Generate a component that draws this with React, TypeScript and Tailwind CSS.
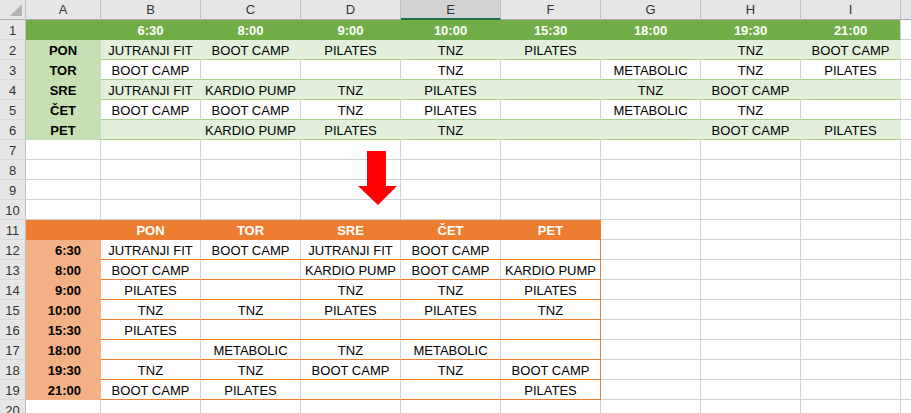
import React from 'react';

const COLS = ['A', 'B', 'C', 'D', 'E', 'F', 'G', 'H', 'I'];
const WIDTHS = ['w-[75px]', 'w-[100px]', 'w-[100px]', 'w-[100px]', 'w-[100px]', 'w-[100px]', 'w-[100px]', 'w-[100px]', 'w-[100px]'];

const TIMES = ['6:30', '8:00', '9:00', '10:00', '15:30', '18:00', '19:30', '21:00'];

const GREEN_ROWS: string[][] = [
    ['PON', 'JUTRANJI FIT', 'BOOT CAMP', 'PILATES', 'TNZ', 'PILATES', '', 'TNZ', 'BOOT CAMP'],
    ['TOR', 'BOOT CAMP', '', '', 'TNZ', '', 'METABOLIC', 'TNZ', 'PILATES'],
    ['SRE', 'JUTRANJI FIT', 'KARDIO PUMP', 'TNZ', 'PILATES', '', 'TNZ', 'BOOT CAMP', ''],
    ['ČET', 'BOOT CAMP', 'BOOT CAMP', 'TNZ', 'PILATES', '', 'METABOLIC', 'TNZ', ''],
    ['PET', '', 'KARDIO PUMP', 'PILATES', 'TNZ', '', '', 'BOOT CAMP', 'PILATES'],
];

const ORANGE_ROWS: string[][] = [
    ['6:30', 'JUTRANJI FIT', 'BOOT CAMP', 'JUTRANJI FIT', 'BOOT CAMP', ''],
    ['8:00', 'BOOT CAMP', '', 'KARDIO PUMP', 'BOOT CAMP', 'KARDIO PUMP'],
    ['9:00', 'PILATES', '', 'TNZ', 'TNZ', 'PILATES'],
    ['10:00', 'TNZ', 'TNZ', 'PILATES', 'PILATES', 'TNZ'],
    ['15:30', 'PILATES', '', '', '', ''],
    ['18:00', '', 'METABOLIC', 'TNZ', 'METABOLIC', ''],
    ['19:30', 'TNZ', 'TNZ', 'BOOT CAMP', 'TNZ', 'BOOT CAMP'],
    ['21:00', 'BOOT CAMP', 'PILATES', '', '', 'PILATES'],
];

const Cell = ({ w, className, children }: { w: string; className: string; children?: React.ReactNode }) => (
    <div className={`${w} h-[20px] shrink-0 box-border border-r border-b pt-[2px] leading-[17px] whitespace-nowrap overflow-visible ${className}`}>
        {children}
    </div>
);

const RowNum = ({ n }: { n: number }) => (
    <div className="w-[26px] h-[20px] shrink-0 box-border border-r border-b border-r-[#BFBFBF] border-b-[#D9D9D9] bg-[#E6E6E6] text-center text-[#333] pt-[2px] leading-[17px]">
        {n}
    </div>
);

const Filler = () => <div className="flex-1 h-[20px] box-border border-b border-[#D4D4D4]" />;

const plain = 'bg-white border-[#D4D4D4]';

export default function App() {
    return (
        <div className="relative w-[911px] h-[413px] overflow-hidden bg-white text-[13px] text-black font-['Liberation_Sans',Arial,sans-serif]">
            {/* column headers */}
            <div className="flex">
                <div className="relative w-[26px] h-[20px] shrink-0 box-border border-r border-b border-r-[#BFBFBF] border-b-[#ABABAB] bg-[#E6E6E6]">
                    <svg className="absolute left-[10px] top-[4px]" width="13" height="13" viewBox="0 0 13 13">
                        <polygon points="12,0 12,12 0,12" fill="#B4B4B4" />
                    </svg>
                </div>
                {COLS.map((c, i) =>
                    c === 'E' ? (
                        <div key={c} className={`${WIDTHS[i]} h-[20px] shrink-0 box-border border-r border-r-[#BFBFBF] border-b-2 border-b-[#217346] bg-[#D2D2D2] text-center text-[#333] pt-[2px] leading-[16px]`}>
                            {c}
                        </div>
                    ) : (
                        <div key={c} className={`${WIDTHS[i]} h-[20px] shrink-0 box-border border-r border-b border-r-[#BFBFBF] border-b-[#ABABAB] bg-[#E6E6E6] text-center text-[#333] pt-[2px] leading-[16px]`}>
                            {c}
                        </div>
                    )
                )}
                <div className="flex-1 h-[20px] box-border border-b border-[#ABABAB] bg-[#E6E6E6]" />
            </div>

            {/* row 1: green header */}
            <div className="flex">
                <RowNum n={1} />
                {COLS.map((c, i) => (
                    <Cell key={c} w={WIDTHS[i]} className={`bg-[#70AD47] border-r-[#70AD47] border-b-[#70AD47] text-center font-bold text-white ${i === 8 ? 'border-r-[#D4D4D4]' : ''}`}>
                        {i > 0 ? TIMES[i - 1] : ''}
                    </Cell>
                ))}
                <Filler />
            </div>

            {/* rows 2-6 */}
            {GREEN_ROWS.map((row, r) => {
                const band = r % 2 === 0;
                return (
                    <div key={r} className="flex">
                        <RowNum n={r + 2} />
                        {row.map((v, i) =>
                            i === 0 ? (
                                <Cell key={i} w={WIDTHS[i]} className="bg-[#C6E0B4] border-r-[#C6E0B4] border-b-[#C6E0B4] text-center font-bold">
                                    {v}
                                </Cell>
                            ) : (
                                <Cell
                                    key={i}
                                    w={WIDTHS[i]}
                                    className={`text-center border-b-[#A9D08E] ${band ? 'bg-[#E2EFDA] border-r-[#E2EFDA]' : 'bg-white border-r-[#D4D4D4]'} ${i === 8 ? 'border-r-[#D4D4D4]' : ''}`}
                                >
                                    {v}
                                </Cell>
                            )
                        )}
                        <Filler />
                    </div>
                );
            })}

            {/* rows 7-10 */}
            {[7, 8, 9, 10].map((n) => (
                <div key={n} className="flex">
                    <RowNum n={n} />
                    {COLS.map((c, i) => (
                        <Cell key={c} w={WIDTHS[i]} className={plain} />
                    ))}
                    <Filler />
                </div>
            ))}

            {/* row 11: orange header */}
            <div className="flex">
                <RowNum n={11} />
                {COLS.map((c, i) =>
                    i < 6 ? (
                        <Cell key={c} w={WIDTHS[i]} className="bg-[#ED7D31] border-r-[#ED7D31] border-b-[#ED7D31] text-center font-bold text-white">
                            {i > 0 ? ['PON', 'TOR', 'SRE', 'ČET', 'PET'][i - 1] : ''}
                        </Cell>
                    ) : (
                        <Cell key={c} w={WIDTHS[i]} className={plain} />
                    )
                )}
                <Filler />
            </div>

            {/* rows 12-19 */}
            {ORANGE_ROWS.map((row, r) => (
                <div key={r} className="flex">
                    <RowNum n={r + 12} />
                    {COLS.map((c, i) => {
                        if (i === 0)
                            return (
                                <Cell key={c} w={WIDTHS[i]} className="bg-[#F4B084] border-r-[#F4B084] border-b-[#F4B084] text-right pr-[19px] font-bold">
                                    {row[0]}
                                </Cell>
                            );
                        if (i < 6)
                            return (
                                <Cell key={c} w={WIDTHS[i]} className={`bg-white text-center border-b-[#ED7D31] ${i === 5 ? 'border-r-[#ED7D31]' : 'border-r-[#D4D4D4]'}`}>
                                    {row[i]}
                                </Cell>
                            );
                        return <Cell key={c} w={WIDTHS[i]} className={plain} />;
                    })}
                    <Filler />
                </div>
            ))}

            {/* row 20 */}
            <div className="flex">
                <RowNum n={20} />
                {COLS.map((c, i) => (
                    <Cell key={c} w={WIDTHS[i]} className={plain} />
                ))}
                <Filler />
            </div>

            {/* red arrow */}
            <svg className="absolute left-[358px] top-[151px]" width="39" height="55" viewBox="0 0 39 55">
                <polygon points="9,0 28,0 28,35 39,35 20,54 0,35 9,35" fill="#FF0000" />
            </svg>
        </div>
    );
}
